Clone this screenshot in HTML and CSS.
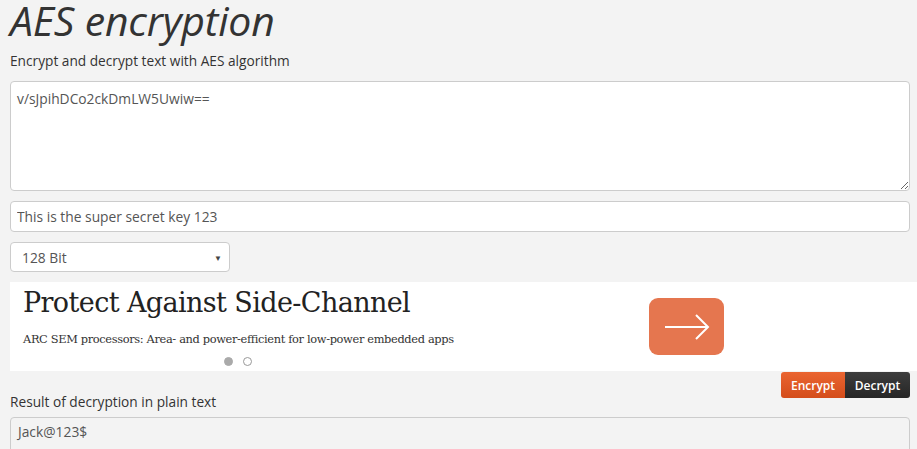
FILE: index.html
```html
<!DOCTYPE html>
<html>
<head>
<meta charset="utf-8">
<link rel="stylesheet" href="styles.css">
</head>
<body>
<div class="page">
  <h1 class="title">AES encryption</h1>
  <p class="lead">Encrypt and decrypt text with AES algorithm</p>
  <textarea class="field area">v/sJpihDCo2ckDmLW5Uwiw==</textarea>
  <input class="field line" type="text" value="This is the super secret key 123">
  <div class="select">
    <span>128 Bit</span>
    <span class="caret">▼</span>
  </div>
  <div class="ad">
    <div class="ad-text">
      <div class="ad-title">Protect Against Side-Channel</div>
      <div class="ad-sub">ARC SEM processors: Area- and power-efficient for low-power embedded apps</div>
      <div class="dots"><span class="dot on"></span><span class="dot"></span></div>
    </div>
    <div class="ad-btn">
      <svg width="46" height="26" viewBox="0 0 46 26"><path d="M1 13H44M32 1L44 13L32 25" fill="none" stroke="#fff" stroke-width="2"/></svg>
    </div>
  </div>
  <div class="actions">
    <button class="btn enc">Encrypt</button><button class="btn dec">Decrypt</button>
  </div>
  <div class="label">Result of decryption in plain text</div>
  <div class="result">Jack@123$</div>
</div>
</body>
</html>
```
FILE: styles.css
```css
html, body {
  margin: 0;
  padding: 0;
  background: #f3f3f3;
}
body {
  font-family: "Open Sans", "Noto Sans", sans-serif;
  color: #333;
  overflow: hidden;
}
.page {
  padding: 0 7px 0 10px;
  display: flex;
  flex-direction: column;
}
.title {
  margin: 0;
  font-size: 41px;
  font-style: italic;
  font-weight: 500;
  line-height: 40px;
  padding-top: 0;
  color: #333;
  letter-spacing: -0.2px;
}
.lead {
  margin: 12px 0 0;
  font-size: 13.7px;
  line-height: 18px;
  color: #333;
}
.field {
  box-sizing: border-box;
  width: 900px;
  border: 1px solid #ccc;
  border-radius: 4px;
  background: #fff;
  font-family: "Open Sans", "Noto Sans", sans-serif;
  font-size: 13.8px;
  color: #555;
  padding: 6px 6px;
}
.area {
  margin-top: 11px;
  height: 110px;
  resize: vertical;
  line-height: 18px;
  padding-top: 8px;
}
.line {
  margin-top: 10px;
  height: 31px;
}
.select {
  margin-top: 10px;
  box-sizing: border-box;
  width: 220px;
  height: 30px;
  border: 1px solid #ccc;
  border-radius: 4px;
  background: #fff;
  display: flex;
  justify-content: space-between;
  align-items: center;
  padding: 0 7px 0 11px;
  font-size: 13.8px;
  color: #555;
}
.caret {
  font-size: 8px;
  color: #444;
}
.ad {
  margin-top: 10px;
  margin-right: -7px;
  height: 89px;
  background: #fff;
  display: flex;
  align-items: flex-start;
}
.ad-text {
  padding: 4px 0 0 13px;
  width: 626px;
}
.ad-title {
  font-family: "DejaVu Serif", serif;
  font-size: 27px;
  line-height: 34px;
  color: #222;
  letter-spacing: -0.6px;
}
.ad-sub {
  font-family: "DejaVu Serif", serif;
  font-size: 11.4px;
  line-height: 16px;
  margin-top: 11px;
  color: #333;
  letter-spacing: -0.35px;
}
.dots {
  display: flex;
  gap: 10px;
  margin: 10px 0 0 201px;
}
.dot {
  width: 9px;
  height: 9px;
  border-radius: 50%;
  border: 1px solid #999;
  box-sizing: border-box;
  background: #fff;
}
.dot.on {
  background: #aaa;
  border-color: #aaa;
}
.ad-btn {
  margin-top: 16px;
  width: 75px;
  height: 57px;
  border-radius: 9px;
  background: #e5764f;
  display: flex;
  align-items: center;
  justify-content: center;
}
.actions {
  display: flex;
  justify-content: flex-end;
  width: 900px;
  margin-top: 1px;
}
.btn {
  height: 26px;
  border: none;
  font-family: "Open Sans", "Noto Sans", sans-serif;
  font-size: 12px;
  font-weight: 600;
  color: #fff;
  padding: 0 8px;
  cursor: pointer;
}
.enc {
  width: 64px;
  background: linear-gradient(#ea6531, #d44d1b);
  border-radius: 3px 0 0 3px;
}
.dec {
  width: 65px;
  background: linear-gradient(#3d3d3d, #262626);
  border-radius: 0 3px 3px 0;
}
.label {
  margin-top: -5px;
  font-size: 13.7px;
  line-height: 18px;
  color: #333;
}
.result {
  margin-top: 6px;
  box-sizing: border-box;
  width: 900px;
  height: 60px;
  border: 1px solid #ccc;
  border-radius: 4px;
  background: #f3f3f3;
  font-size: 13.8px;
  color: #555;
  padding: 4px 7px;
}
```
